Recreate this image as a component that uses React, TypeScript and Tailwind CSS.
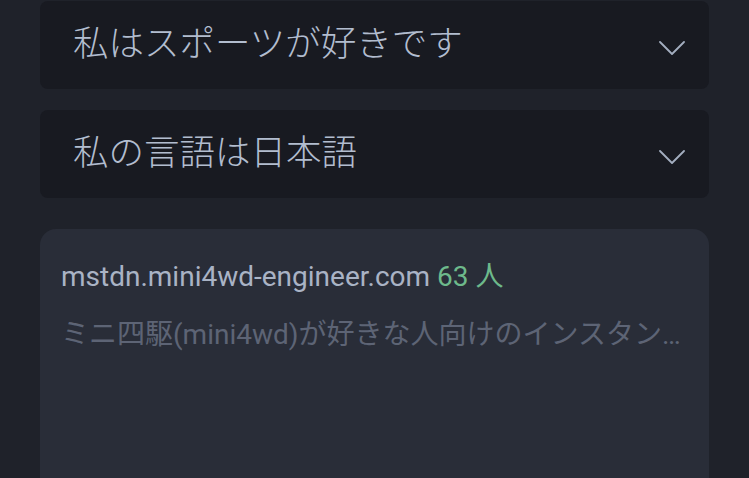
import React from 'react';

const Chevron: React.FC = () => (
  <svg width="26" height="14" viewBox="0 0 26 14" fill="none" className="shrink-0 mt-[5px]">
    <polyline points="1,1 13,13 25,1" stroke="#a3aec0" strokeWidth="1.8" strokeLinecap="round" strokeLinejoin="round" />
  </svg>
);

const SelectBox: React.FC<{ label: string }> = ({ label }) => (
  <div className="h-[88px] rounded-lg bg-[#181a21] flex items-center justify-between pl-[33px] pr-[24px]">
    <span className="text-[35.5px] font-light text-[#b2bdcf] leading-none">{label}</span>
    <Chevron />
  </div>
);

export default function App() {
  return (
    <div
      className="w-[749px] h-[478px] overflow-hidden bg-[#1f222a] px-[40px] pt-px"
      style={{ fontFamily: 'Roboto, "Noto Sans CJK JP", sans-serif' }}
    >
      <div className="flex flex-col gap-[21px]">
        <SelectBox label="私はスポーツが好きです" />
        <SelectBox label="私の言語は日本語" />
      </div>

      {/* server card */}
      <div className="mt-[31px] h-[300px] rounded-2xl bg-[#292d38] px-[21px] pt-[32px]">
        <div className="text-[28px] leading-[32px] whitespace-nowrap">
          <span className="text-[#a9b3c5]">mstdn.mini4wd-engineer.com</span>{' '}
          <span className="text-[#6db98b]">63 人</span>
        </div>
        <p className="mt-[26px] text-[28px] leading-[32px] text-[#5d6475] whitespace-nowrap">
          ミニ四駆(mini4wd)が好きな人向けのインスタン…
        </p>
      </div>
    </div>
  );
}
